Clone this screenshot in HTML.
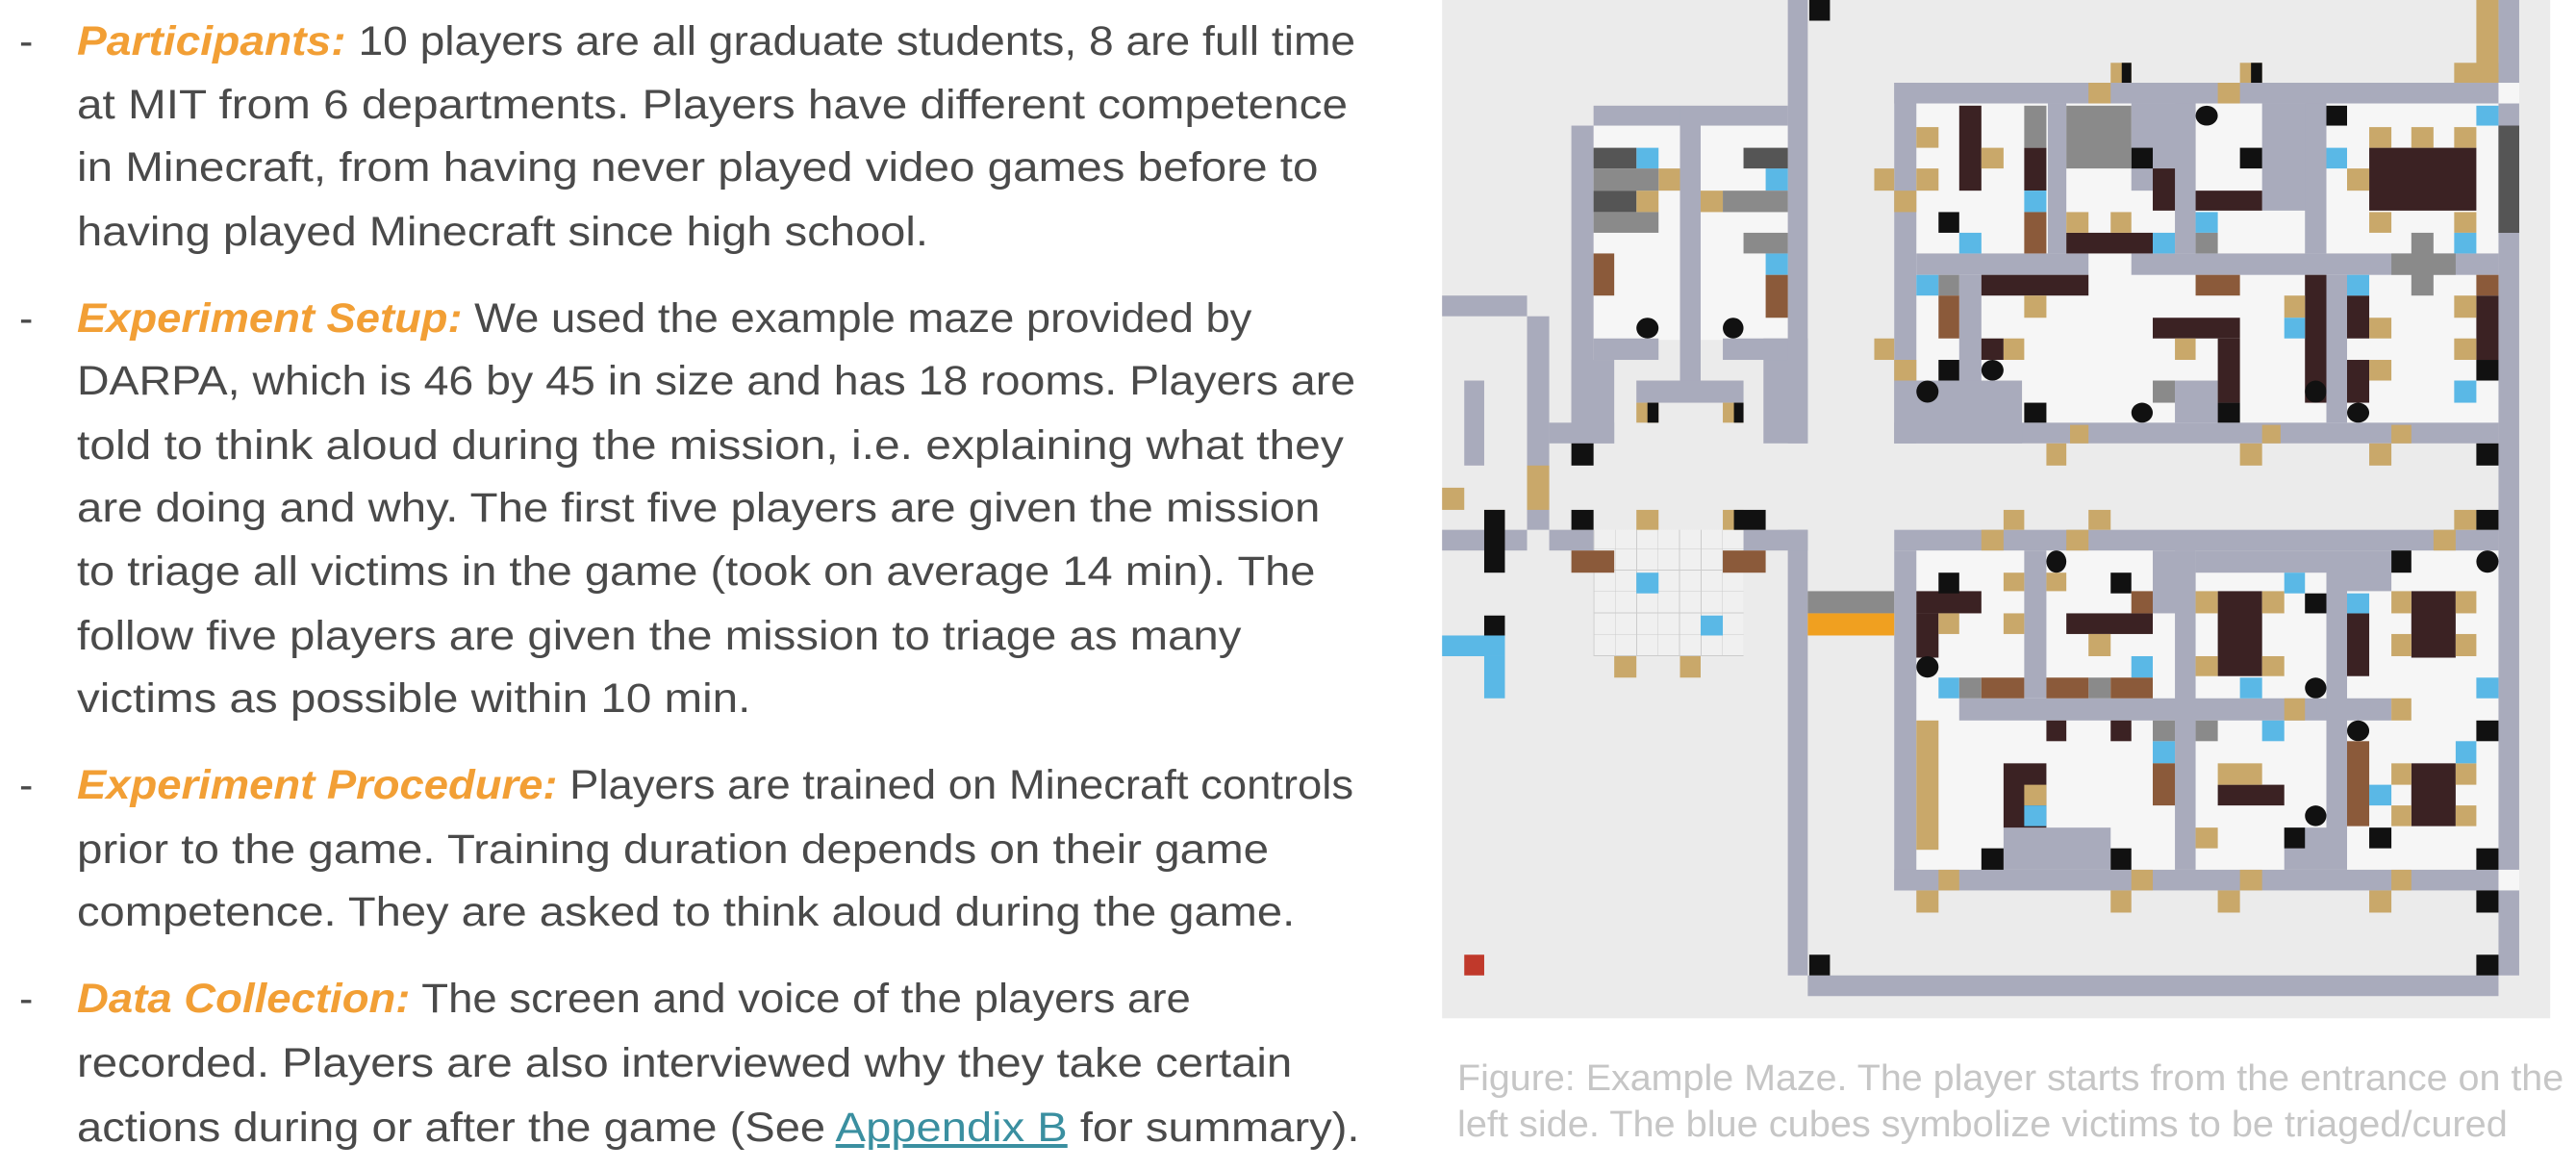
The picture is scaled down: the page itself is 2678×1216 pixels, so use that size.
<!DOCTYPE html>
<html><head><meta charset="utf-8"><style>
html,body{margin:0;padding:0;background:#fff;}
body{width:2678px;height:1216px;position:relative;overflow:hidden;font-family:"Liberation Sans",sans-serif;}
.l{position:absolute;left:80px;height:66px;line-height:66px;font-size:43px;color:#4a4a4a;white-space:nowrap;transform-origin:0 50%;}
.dash{position:absolute;left:20px;font-size:43px;color:#4a4a4a;line-height:66px;height:66px;}
.o{color:#f29f35;font-style:italic;font-weight:bold;}
a{color:#3a8fa0;text-decoration:underline;}
.cap{position:absolute;left:1515px;font-size:38px;color:#c6c6c6;white-space:nowrap;line-height:48px;transform-origin:0 50%;}
#mz{position:absolute;left:1480px;top:0;width:1560px;height:1400px;transform:scale(0.768);transform-origin:0 0;}
#mz div{position:absolute;}
.bg{background:#ebebeb;}
.wh{background:#f6f6f6;}
.w{background:#a9abbc;}
.d{background:#3b2223;}
.wd{background:#c9a86a;}
.b{background:#5ab8e6;}
.k{background:#111;}
.c{background:#111;border-radius:50%;}
.g{background:#555;}
.cb{background:#8a8a8a;}
</style></head><body>
<div class="dash" style="top:10px">-</div>
<div class="l" style="top:10px"><span class="o">Participants:</span> 10 players are all graduate students, 8 are full time</div>
<div class="l" style="top:76px">at MIT from 6 departments. Players have different competence</div>
<div class="l" style="top:141px">in Minecraft, from having never played video games before to</div>
<div class="l" style="top:208px">having played Minecraft since high school.</div>
<div class="dash" style="top:298px">-</div>
<div class="l" style="top:298px"><span class="o">Experiment Setup:</span> We used the example maze provided by</div>
<div class="l" style="top:363px">DARPA, which is 46 by 45 in size and has 18 rooms. Players are</div>
<div class="l" style="top:430px">told to think aloud during the mission, i.e. explaining what they</div>
<div class="l" style="top:495px">are doing and why. The first five players are given the mission</div>
<div class="l" style="top:561px">to triage all victims in the game (took on average 14 min). The</div>
<div class="l" style="top:628px">follow five players are given the mission to triage as many</div>
<div class="l" style="top:693px">victims as possible within 10 min.</div>
<div class="dash" style="top:783px">-</div>
<div class="l" style="top:783px"><span class="o">Experiment Procedure:</span> Players are trained on Minecraft controls</div>
<div class="l" style="top:850px">prior to the game. Training duration depends on their game</div>
<div class="l" style="top:915px">competence. They are asked to think aloud during the game.</div>
<div class="dash" style="top:1005px">-</div>
<div class="l" style="top:1005px"><span class="o">Data Collection:</span> The screen and voice of the players are</div>
<div class="l" style="top:1072px">recorded. Players are also interviewed why they take certain</div>
<div class="l" style="top:1139px">actions during or after the game (See <a>Appendix B</a> for summary).</div>

<div class="cap" style="top:1097px">Figure: Example Maze. The player starts from the entrance on the</div>
<div class="cap" style="top:1145px">left side. The blue cubes symbolize victims to be triaged/cured</div>

<div id="mz">
<div class="bg" style="left:25px;top:0;width:1500px;height:1378px"></div>
<div class="wh" style="left:230px;top:170px;width:263px;height:290px"></div>
<div class="wh" style="left:637px;top:112px;width:846px;height:488px"></div>
<div class="wh" style="left:637px;top:717px;width:846px;height:488px"></div>
</div>
<script>
var W=[
"493,0,520,600","460,458,520,600","493,717,520,1320","230,143,347,170","375,143,493,170","200,170,230,600","347,143,375,520","230,458,318,487","200,487,258,600","288,515,433,545","405,458,493,487","25,400,140,428","140,428,170,717","170,572,258,600","55,515,82,630","25,717,82,745","110,717,140,745","170,717,230,745","433,717,520,745",
"520,1320,1455,1348","637,112,1455,140","1455,0,1483,112","1455,140,1483,1177","1455,1205,1483,1320","637,112,667,600","637,572,1455,600","667,343,900,372","958,343,1455,372","845,140,870,343","958,140,1045,258","1017,140,1045,343","1135,140,1222,285","1193,140,1222,343","725,372,755,572","1222,372,1250,572","637,515,810,600","1017,515,1075,572",
"637,717,1455,745","637,745,667,1205","637,1177,1455,1205","813,745,843,945","725,945,1310,975","987,745,1045,830","1017,745,1045,1177","1222,745,1250,1177","1250,745,1310,800","1045,745,1222,775","785,1120,930,1177","1165,1120,1222,1177"];
var D=["725,143,755,258","813,200,843,258","870,315,987,343","987,228,1017,285","1045,258,1135,285","1280,200,1425,285","755,372,900,400","987,430,1105,458","1075,458,1105,545","1193,372,1222,545","1250,400,1280,458","1250,487,1280,545","1425,400,1455,487","755,458,785,487","667,800,755,830","667,830,697,890","870,830,987,858","1075,800,1135,915","1250,830,1280,915","1337,800,1397,890","785,1033,843,1120","1075,1062,1165,1090","1337,1033,1397,1118","843,975,870,1003","930,975,958,1003"];
var WD=["667,172,697,200","667,228,697,258","755,200,785,228","870,287,900,315","930,287,958,315","1280,172,1310,200","1337,172,1367,200","1395,172,1425,200","1250,228,1280,258","1280,287,1310,315","1395,287,1425,315","813,400,843,430","785,458,813,487","1165,400,1193,430","1017,458,1045,487","1280,430,1310,458","1395,400,1425,430","1395,458,1425,487","1280,487,1310,515","785,775,813,800","785,830,813,858","697,830,725,858","843,775,870,800","900,858,930,888","1045,800,1075,830","1135,800,1165,830","1045,888,1075,915","1135,888,1165,915","1310,800,1337,830","1397,800,1425,830","1310,858,1337,888","1397,858,1425,888","813,1062,843,1090","1075,1033,1135,1062","1045,1120,1075,1148","1310,1033,1337,1062","1397,1033,1425,1062","1310,1090,1337,1118","1397,1090,1425,1118","667,975,697,1150","1425,0,1455,112","1395,85,1455,112","900,112,930,140","1075,112,1105,140","318,228,347,258","288,258,318,287","375,258,405,287","637,258,667,287","637,487,667,515","875,575,900,600","1135,575,1160,600","1310,575,1337,600","140,630,170,690","755,717,785,745","870,717,900,745","1367,717,1397,745","1165,945,1193,975","1310,945,1337,975","697,1177,725,1205","958,1177,987,1205","1105,1177,1135,1205","1310,1177,1337,1205","288,545,318,572","405,545,433,572","258,888,288,917","347,888,375,917","930,85,958,112","1105,85,1135,112","610,228,637,258","610,458,637,487","843,600,870,630","1105,600,1135,630","1280,600,1310,630","25,660,55,690","82,690,110,717","288,690,318,717","405,690,433,717","785,690,813,717","900,690,930,717","1395,690,1425,717","667,1205,697,1235","930,1205,958,1235","1075,1205,1105,1235","1280,1205,1310,1235"];
var B=["288,200,318,228","463,228,493,258","463,343,493,372","725,315,755,343","813,258,843,287","987,315,1017,343","1045,287,1075,315","1222,200,1250,228","1425,143,1455,170","1395,315,1425,343","667,372,697,400","1165,430,1193,458","1250,372,1280,400","1395,515,1425,545","288,775,318,803","375,833,405,860","25,860,110,888","82,888,110,945","1165,775,1193,803","1250,803,1280,830","697,917,725,945","958,888,987,917","1105,917,1135,945","1425,917,1455,945","987,1003,1017,1033","813,1090,843,1118","1135,975,1165,1003","1397,1003,1425,1033","1280,1062,1310,1090"];
var K=["697,287,725,315","958,200,987,228","1105,200,1135,228","1222,143,1250,170","697,487,725,515","813,545,843,572","1075,545,1105,572","1425,487,1455,515","200,600,230,630","200,690,230,717","697,775,725,803","930,775,958,803","1310,745,1337,775","1193,803,1222,830","930,1148,958,1177","1280,1120,1310,1148","1165,1120,1193,1148","755,1148,785,1177","82,690,110,775","82,833,110,860","420,690,463,717","522,0,550,28","1425,600,1455,630","1425,690,1455,717","1425,975,1455,1003","1425,1148,1455,1177","1425,1205,1455,1235","522,1292,550,1320","1425,1292,1455,1320","303,545,318,572","420,545,433,572","1120,85,1135,112","945,85,958,112"];
var C=["288,430,318,458","405,430,433,458","1045,143,1075,170","667,515,697,545","755,487,785,515","958,545,987,572","1193,515,1222,545","1250,545,1280,572","843,745,870,775","1425,745,1455,775","667,888,697,917","1193,917,1222,945","1250,975,1280,1003","1193,1090,1222,1118"];
var G=["230,200,288,228","230,258,288,287","433,200,493,228","1455,170,1483,315"];
var CB=["230,228,318,258","230,287,318,315","405,258,493,287","433,315,493,343","870,143,958,228","1310,343,1397,372","1337,315,1367,400","520,800,637,830","697,372,725,400","813,143,843,200","1045,315,1075,343","987,515,1017,545","725,917,755,945","900,917,930,945","1045,975,1075,1003","987,975,1017,1003"];
var R=["200,745,258,775","405,745,463,775","230,343,258,400","463,372,493,430","813,287,843,343","1045,372,1105,400","1425,372,1455,400","958,800,987,830","755,917,813,945","843,917,900,945","930,917,987,945","987,1033,1017,1090","1250,1003,1280,1118","697,400,725,458"];
var mz=document.getElementById('mz');
function add(arr,cls,extra){arr.forEach(function(s){var a=s.split(',').map(Number);var e=document.createElement('div');e.className=cls;e.style.left=a[0]+'px';e.style.top=a[1]+'px';e.style.width=(a[2]-a[0])+'px';e.style.height=(a[3]-a[1])+'px';if(extra)e.style.cssText+=extra;mz.appendChild(e);});}
var gl=document.createElement('div');gl.style.cssText='left:230px;top:717px;width:203px;height:171px;background:repeating-linear-gradient(90deg,#ccc 0 1px,transparent 1px 29px),repeating-linear-gradient(0deg,#ccc 0 1px,#f0f0f0 1px 29px);';mz.appendChild(gl);
add(W,'w');add(D,'d');add(WD,'wd');add(B,'b');add(K,'k');add(C,'c');add(G,'g');add(CB,'cb');
add(R,'x','background:#8b5a3a;');
add(["520,830,637,860"],'x','background:#f0a020;');
add(["55,1292,82,1320"],'x','background:#c0392b;');
add(["1455,170,1483,315"],'g');
var T=[1329,1321,1290,885,1221,1329,1317,1292,1288,1210,700,1327,1239,1266,1158,1263,1334];
var ls=document.querySelectorAll('.l');
ls.forEach(function(el,i){var w=el.scrollWidth;el.style.transform='scaleX('+(T[i]/w)+')';});
var CT=[1150,1092];
document.querySelectorAll('.cap').forEach(function(el,i){el.style.transform='scaleX('+(CT[i]/el.scrollWidth)+')';});
</script>
</body></html>
